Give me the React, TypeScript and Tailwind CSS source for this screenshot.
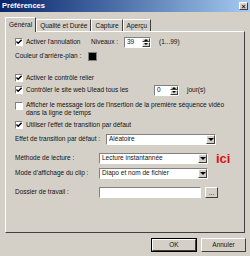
import React from "react";

const sunken =
  "border border-t-[#808080] border-l-[#808080] border-b-white border-r-white bg-white";
const raised =
  "border border-t-white border-l-white border-b-[#404040] border-r-[#404040] bg-[#d4d0c8]";

function Check({ checked }: { checked?: boolean }) {
  return (
    <span
      className={`w-[8px] h-[8px] shrink-0 flex items-center justify-center ${sunken}`}
    >
      {checked && (
        <svg width="6" height="6" viewBox="0 0 7 7">
          <path d="M0.5 3 L2.5 5 L6.5 1" stroke="#000" strokeWidth="1.6" fill="none" />
        </svg>
      )}
    </span>
  );
}

function Spin({ value, width }: { value: string; width: string }) {
  return (
    <span className={`${width} h-[11px] flex items-center ${sunken}`}>
      <span className="flex-1 pl-[2px] leading-none">{value}</span>
      <span className="w-[8px] h-full flex flex-col">
        <span className={`flex-1 flex items-center justify-center ${raised}`}>
          <span className="border-x-[2px] border-x-transparent border-b-[2px] border-b-black" />
        </span>
        <span className={`flex-1 flex items-center justify-center ${raised}`}>
          <span className="border-x-[2px] border-x-transparent border-t-[2px] border-t-black" />
        </span>
      </span>
    </span>
  );
}

function Select({ value, width }: { value: string; width: string }) {
  return (
    <span className={`${width} h-[11px] flex items-center ${sunken}`}>
      <span className="flex-1 pl-[2px] leading-none">{value}</span>
      <span className={`w-[9px] h-full flex items-center justify-center ${raised}`}>
        <span className="border-x-[3px] border-x-transparent border-t-[3px] border-t-black" />
      </span>
    </span>
  );
}

function CheckRow({ checked, children, className }: { checked?: boolean; children: React.ReactNode; className: string }) {
  return (
    <div className={`flex items-center gap-[3px] ${className}`}>
      <Check checked={checked} />
      {children}
    </div>
  );
}

export default function App() {
  return (
    <div className="w-[250px] h-[256px] bg-[#d4d0c8] overflow-hidden text-[6.5px] text-[#111] whitespace-nowrap font-['Liberation_Sans',Arial,sans-serif]">
      <div className="h-[12px] flex items-center justify-between pl-[2px] pr-[2px] bg-gradient-to-r from-[#0a246a] to-[#a6caf0]">
        <span className="text-white font-bold text-[7.5px] leading-none">Préférences</span>
        <span className={`w-[9px] h-[8px] flex items-center justify-center text-[7px] font-bold leading-none ${raised}`}>
          ×
        </span>
      </div>

      <div className="flex items-end pl-[5px] h-[19px]">
        <div className="h-[15px] px-[3px] flex items-center border-t border-l border-white border-r border-r-[#404040] bg-[#d4d0c8] relative top-[1px]">
          Général
        </div>
        <div className="h-[12px] px-[3px] flex items-center border-t border-l border-white border-r border-r-[#404040]">
          Qualité et Durée
        </div>
        <div className="h-[12px] px-[3px] flex items-center border-t border-l border-white border-r border-r-[#404040]">
          Capture
        </div>
        <div className="h-[12px] px-[3px] flex items-center border-t border-l border-white border-r border-r-[#404040]">
          Aperçu
        </div>
      </div>

      <div className="ml-[5px] w-[240px] h-[202px] border border-t-white border-l-white border-r-[#404040] border-b-[#404040] flex flex-col pl-[9px]">
        <div className="flex items-center mt-[4px] h-[12px]">
          <Check checked />
          <span className="ml-[3px] w-[65px]">Activer l'annulation</span>
          <span className="w-[33px]">Niveaux :</span>
          <Spin value="39" width="w-[27px]" />
          <span className="ml-[8px]">(1...99)</span>
        </div>
        <div className="flex items-center mt-[3px] h-[10px]">
          <span className="w-[73px]">Couleur d'arrière-plan :</span>
          <span className="w-[9px] h-[9px] bg-black border border-[#808080]" />
        </div>
        <CheckRow checked className="mt-[13px] h-[8px]">
          <span>Activer le contrôle relier</span>
        </CheckRow>
        <div className="flex items-center mt-[2px] h-[12px]">
          <Check checked />
          <span className="ml-[3px] w-[128px]">Contrôler le site web Ulead tous les</span>
          <Spin value="0" width="w-[25px]" />
          <span className="ml-[8px]">jour(s)</span>
        </div>
        <div className="flex items-start mt-[5px] h-[16px] gap-[3px]">
          <span className="mt-[1px]"><Check /></span>
          <span className="leading-[8px]">
            Afficher le message lors de l'insertion de la première séquence vidéo
            <br />
            dans la ligne de temps
          </span>
        </div>
        <CheckRow checked className="mt-[4px] h-[8px]">
          <span>Utiliser l'effet de transition par défaut</span>
        </CheckRow>
        <div className="flex items-center mt-[5px] h-[10px]">
          <span className="w-[91px]">Effet de transition par défaut :</span>
          <Select value="Aléatoire" width="w-[110px]" />
        </div>
        <div className="flex items-center mt-[8px] h-[12px]">
          <span className="w-[84px]">Méthode de lecture :</span>
          <Select value="Lecture instantannée" width="w-[109px]" />
          <span className="ml-[8px] text-[#e01010] font-bold text-[13px] leading-none">
            ici
          </span>
        </div>
        <div className="flex items-center mt-[4px] h-[10px]">
          <span className="w-[84px]">Mode d'affichage du clip :</span>
          <Select value="Diapo et nom de fichier" width="w-[109px]" />
        </div>
        <div className="flex items-center mt-[8px] h-[12px]">
          <span className="w-[84px]">Dossier de travail :</span>
          <span className={`w-[102px] h-[11px] ${sunken}`} />
          <span className={`ml-[4px] w-[13px] h-[11px] flex items-end justify-center leading-none ${raised}`}>
            ...
          </span>
        </div>
      </div>

      <div className="flex justify-end gap-[4px] pr-[4px] mt-[5px]">
        <div className="w-[46px] h-[14px] border border-black">
          <div className={`w-full h-full flex items-center justify-center ${raised}`}>OK</div>
        </div>
        <div className={`w-[45px] h-[14px] flex items-center justify-center ${raised}`}>Annuler</div>
      </div>
    </div>
  );
}
